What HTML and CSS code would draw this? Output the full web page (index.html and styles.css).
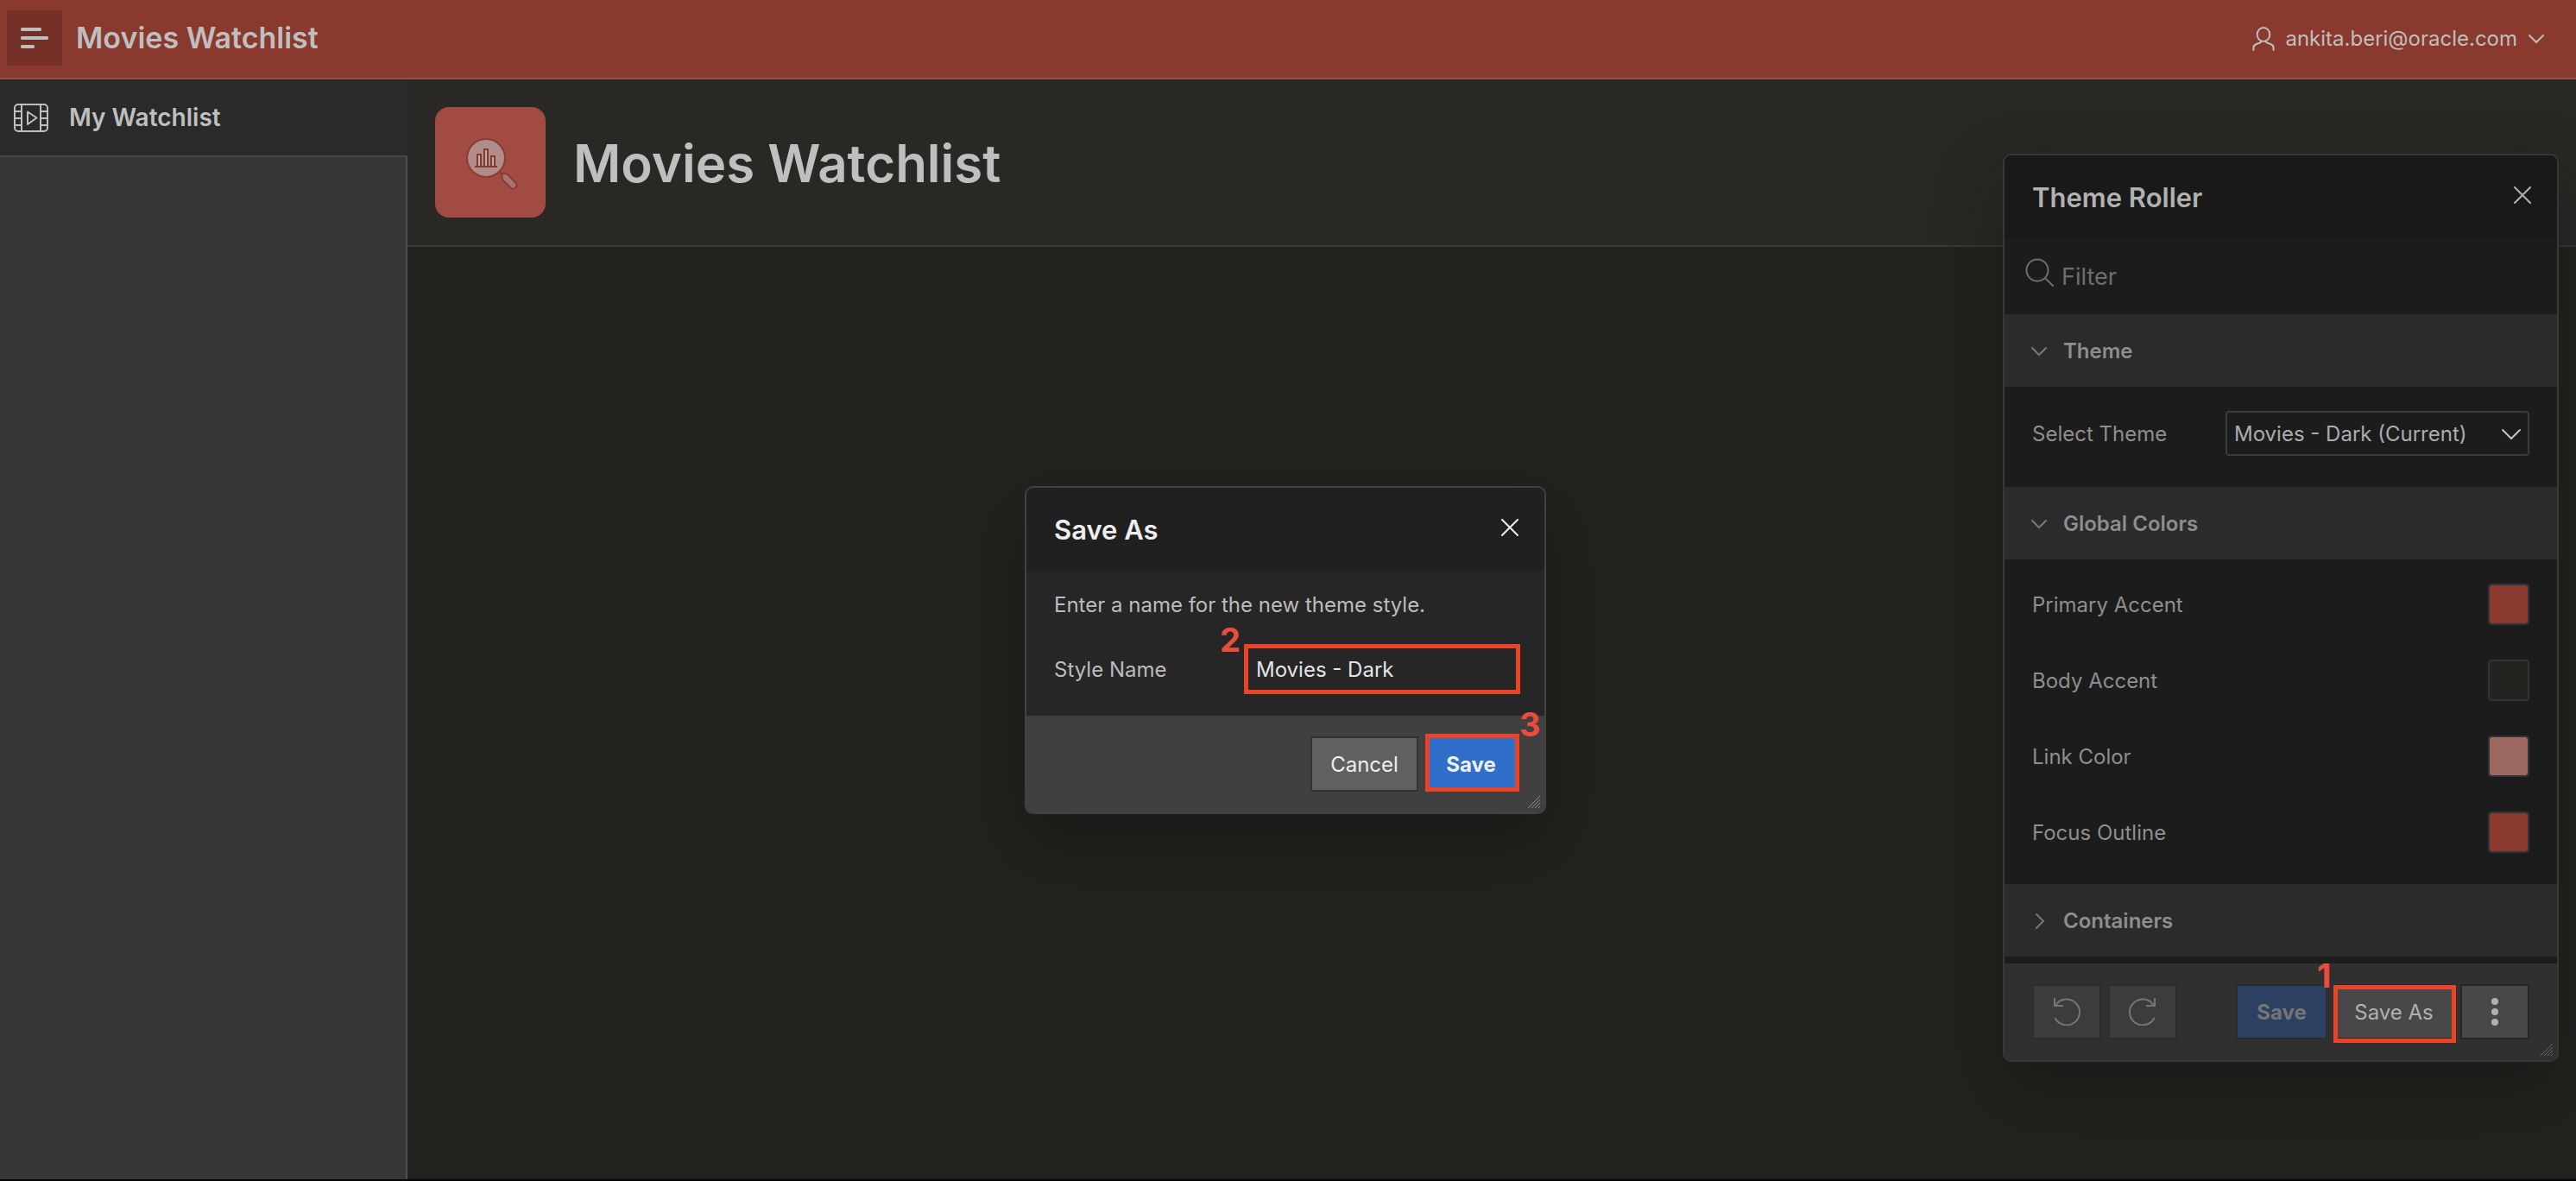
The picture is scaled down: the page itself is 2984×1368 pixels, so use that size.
FILE: index.html
```html
<!DOCTYPE html>
<html lang="en">
<head>
<meta charset="utf-8">
<meta name="viewport" content="width=device-width, initial-scale=1">
<title>Movies Watchlist</title>
<link rel="stylesheet" href="styles.css">
</head>
<body>
<header class="app-header">
  <button class="nav-toggle" type="button" aria-label="Toggle navigation">
    <svg width="32" height="24" viewBox="0 0 32 24" aria-hidden="true"><g fill="currentColor"><rect width="24" height="4" rx="1.5"/><rect y="10" width="32" height="4" rx="1.5"/><rect y="20" width="16" height="4" rx="1.5"/></g></svg>
  </button>
  <a class="app-name" href="#">Movies Watchlist</a>
  <button class="user-menu" type="button">
    <svg width="26" height="28" viewBox="0 0 26 28" aria-hidden="true"><g fill="none" stroke="currentColor" stroke-width="2" stroke-linecap="round"><ellipse cx="13" cy="9" rx="7.3" ry="8"/><path d="M1.4 27v-2.500c0-2.600 1.500-3.800 3.500-4.500l3.500-1.200c1.300-.5 2-1.100 2.300-2.200M24.600 27v-2.500c0-2.600-1.500-3.800-3.500-4.500l-3.500-1.200c-1.300-.5-2-1.100-2.300-2.200"/></g></svg>
    <span>ankita.beri@oracle.com</span>
    <svg width="20" height="12" viewBox="0 0 20 12" aria-hidden="true"><path d="M2 2l8 8 8-8" fill="none" stroke="currentColor" stroke-width="2" stroke-linecap="round"/></svg>
  </button>
</header>

<div class="app-body">
  <nav class="side-nav" aria-label="Main">
    <a class="nav-item" href="#">
      <svg width="40" height="33" viewBox="0 0 40 33" aria-hidden="true"><g fill="none" stroke="currentColor" stroke-width="2"><rect x="1" y="1" width="38" height="31" rx="4"/><path d="M9 1v31M31 1v31M1 9h8M1 17h8M1 25h8M31 9h8M31 17h8M31 25h8M16 9.500v14.500l10.500-7.500z" stroke-linejoin="round"/></g></svg>
      <span>My Watchlist</span>
    </a>
  </nav>
  <main class="content">
    <section class="hero">
      <div class="hero-icon">
        <svg width="64" height="64" viewBox="0 0 64 64" aria-hidden="true">
          <circle cx="27" cy="27" r="22" fill="#b08d89" stroke="#873c34" stroke-width="2"/>
          <path d="M43 43l3 3" stroke="#873c34" stroke-width="2"/>
          <path d="M45.500 47.500q-.5-2.500 2-2.500 3-.5 5 1.500l9 9.500c3 4-2 8.500-6 5.500l-9-9q-1.500-2-1-5z" fill="#a77570" stroke="#873c34" stroke-width="2"/>
          <g fill="#c3aeab" stroke="#843830" stroke-width="2"><path d="M17 37V23h4v14M25 37V17h4v20M33 37V25h4v12"/><path d="M14 37h26"/></g>
        </svg>
      </div>
      <h1>Movies Watchlist</h1>
    </section>
  </main>
</div>

<section class="dialog theme-roller" role="dialog" aria-labelledby="roller-title">
  <header class="dialog-head">
    <h2 id="roller-title">Theme Roller</h2>
    <button class="close" type="button" aria-label="Close"><svg width="20" height="20" viewBox="0 0 20 20" aria-hidden="true"><path d="M1 1l18 18M19 1L1 19" stroke="currentColor" stroke-width="2" stroke-linecap="round"/></svg></button>
  </header>
  <div class="filter">
    <svg width="34" height="34" viewBox="0 0 34 34" aria-hidden="true"><g fill="none" stroke="currentColor" stroke-width="2" stroke-linecap="round"><circle cx="14" cy="14" r="12.500"/><path d="M23 23l9 9"/></g></svg>
    <input type="text" placeholder="Filter" aria-label="Filter">
  </div>
  <button class="group-head" type="button" aria-expanded="true">
    <svg width="20" height="20" viewBox="0 0 20 20" aria-hidden="true"><path d="M2 6l8 8 8-8" fill="none" stroke="currentColor" stroke-width="2" stroke-linecap="round"/></svg>Theme
  </button>
  <div class="group group-select">
    <div class="row">
      <label for="theme">Select Theme</label>
      <div class="select-box">
        <select id="theme"><option>Movies - Dark (Current)</option></select>
        <svg width="24" height="14" viewBox="0 0 24 14" aria-hidden="true"><path d="M2 2l10 10 10-10" fill="none" stroke="currentColor" stroke-width="2" stroke-linecap="round"/></svg>
      </div>
    </div>
  </div>
  <button class="group-head" type="button" aria-expanded="true">
    <svg width="20" height="20" viewBox="0 0 20 20" aria-hidden="true"><path d="M2 6l8 8 8-8" fill="none" stroke="currentColor" stroke-width="2" stroke-linecap="round"/></svg>Global Colors
  </button>
  <div class="group">
    <div class="row"><label for="c1">Primary Accent</label><input id="c1" type="color" value="#89392d"></div>
    <div class="row"><label for="c2">Body Accent</label><input id="c2" type="color" value="#24221e"></div>
    <div class="row"><label for="c3">Link Color</label><input id="c3" type="color" value="#9d6860"></div>
    <div class="row"><label for="c4">Focus Outline</label><input id="c4" type="color" value="#89392d"></div>
  </div>
  <button class="group-head" type="button" aria-expanded="false">
    <svg width="20" height="20" viewBox="0 0 20 20" aria-hidden="true"><path d="M7 2l8 8-8 8" fill="none" stroke="currentColor" stroke-width="2" stroke-linecap="round"/></svg>Containers
  </button>
  <footer class="dialog-foot">
    <button class="btn icon-btn faded" type="button" aria-label="Undo" disabled><svg width="32" height="32" viewBox="0 0 32 32" aria-hidden="true"><path d="M2 0v9h10M3.300 8.500A15 15 0 1 1 2.500 23" fill="none" stroke="currentColor" stroke-width="2"/></svg></button>
    <button class="btn icon-btn faded" type="button" aria-label="Redo" disabled><svg width="32" height="32" viewBox="0 0 32 32" aria-hidden="true"><path d="M30 0v9H20M28.700 8.500A15 15 0 1 0 29.500 23" fill="none" stroke="currentColor" stroke-width="2"/></svg></button>
    <span class="spacer"></span>
    <button class="btn text-btn btn-save faded" type="button" disabled>Save</button>
    <span class="marked marked-one">
      <button class="btn text-btn btn-save-as" type="button">Save As</button>
      <b class="step">1</b>
    </span>
    <button class="btn icon-btn" type="button" aria-label="More"><svg width="8" height="32" viewBox="0 0 8 32" aria-hidden="true"><g fill="currentColor"><circle cx="4" cy="4" r="4"/><circle cx="4" cy="16" r="4"/><circle cx="4" cy="28" r="4"/></g></svg></button>
  </footer>
  <svg class="grip" width="16" height="16" viewBox="0 0 16 16" aria-hidden="true"><g stroke="currentColor"><path d="M1 15L15 1M5 15L15 5M9 15l6-6M13 15l2-2"/></g></svg>
</section>

<section class="dialog save-dialog" role="dialog" aria-labelledby="save-title">
  <header class="dialog-head">
    <h2 id="save-title">Save As</h2>
    <button class="close" type="button" aria-label="Close"><svg width="20" height="20" viewBox="0 0 20 20" aria-hidden="true"><path d="M1 1l18 18M19 1L1 19" stroke="currentColor" stroke-width="2" stroke-linecap="round"/></svg></button>
  </header>
  <div class="save-body">
    <p>Enter a name for the new theme style.</p>
    <div class="field">
      <label for="style-name">Style Name</label>
      <span class="marked marked-two">
        <input id="style-name" type="text" value="Movies - Dark">
        <b class="step">2</b>
      </span>
    </div>
  </div>
  <footer class="dialog-foot">
    <span class="spacer"></span>
    <button class="btn text-btn btn-cancel" type="button">Cancel</button>
    <span class="marked marked-three">
      <button class="btn text-btn btn-save" type="button">Save</button>
      <b class="step">3</b>
    </span>
  </footer>
  <svg class="grip" width="16" height="16" viewBox="0 0 16 16" aria-hidden="true"><g stroke="currentColor"><path d="M1 15L15 1M5 15L15 5M9 15l6-6M13 15l2-2"/></g></svg>
</section>
</body>
</html>
```
FILE: styles.css
```css
* { box-sizing: border-box; }

body {
  margin: 0;
  min-height: 100vh;
  display: flex;
  flex-direction: column;
  position: relative;
  background: #24221e;
  border-bottom: 2px solid #060406;
  color: #bfbfbf;
  font: 24px/32px Inter, "Liberation Sans", sans-serif;
}

h1, h2, p { margin: 0; }
svg { display: block; flex: none; }
a { color: inherit; text-decoration: none; }
button, input, select { font: inherit; color: inherit; margin: 0; }
button { border: 0; padding: 0; background: none; }

.app-header {
  display: flex;
  align-items: center;
  gap: 16px;
  padding: 12px 36px 14px 8px;
  background: #89392d;
  border-bottom: 2px solid #964e43;
}
.nav-toggle {
  display: grid;
  place-items: center;
  width: 64px;
  height: 64px;
  border-radius: 4px;
  background: #742f26;
}
.app-name { font-size: 34px; font-weight: 600; line-height: 40px; }
.user-menu {
  display: flex;
  align-items: center;
  gap: 12px;
  margin-left: auto;
  padding-top: 2px;
}

.app-body { flex: 1; display: flex; }
.side-nav {
  width: 472px;
  background: #373737;
  border-right: 2px solid #4d4d4d;
}
.nav-item {
  display: flex;
  align-items: center;
  gap: 24px;
  height: 90px;
  margin-right: -2px;
  padding-left: 16px;
  background: #2a2a2a;
  border-bottom: 2px solid #464646;
  font-size: 28px;
  font-weight: 600;
}
.content { flex: 1; border-bottom: 2px solid #1a1b1a; }
.hero {
  display: flex;
  align-items: center;
  gap: 32px;
  padding: 32px;
  background: #2a2825;
  border-bottom: 2px solid #3a3836;
}
.hero-icon {
  display: grid;
  place-items: center;
  width: 128px;
  height: 128px;
  border-radius: 16px;
  background: #a14b42;
}
.hero h1 { padding-top: 2px; font-size: 60px; line-height: 72px; font-weight: 600; }

.dialog {
  position: absolute;
  display: flex;
  flex-direction: column;
  border: 2px solid #3a3836;
  border-radius: 10px;
  overflow: hidden;
}
.dialog-head {
  display: flex;
  align-items: center;
  justify-content: space-between;
  height: 96px;
  padding: 0 30px 0 32px;
}
.dialog-head h2 { padding-top: 2px; font-size: 31px; line-height: 40px; font-weight: 600; }
.close { padding-bottom: 4px; }
.dialog-foot {
  display: flex;
  align-items: center;
  gap: 8px;
  padding: 24px 32px;
}
.spacer { flex: 1; }
.grip { position: absolute; right: 4px; bottom: 4px; }

.btn {
  display: flex;
  align-items: center;
  justify-content: center;
  height: 64px;
  border: 2px solid;
  white-space: nowrap;
}
.text-btn { padding-top: 2px; }
.icon-btn { width: 80px; }
.btn-save { width: 106px; font-weight: 700; }
.btn-save-as { width: 138px; }
.btn-cancel { width: 125px; }
label { padding-top: 2px; }

/* Theme Roller */
.theme-roller {
  top: 178px;
  right: 20px;
  width: 644px;
  background: #1c1c1c;
  color: #8e8e8e;
  box-shadow: 0 32px 80px rgba(16, 16, 18, .4);
}
.theme-roller .dialog-head { background: #191919; color: #b1b1b1; }
.filter {
  display: flex;
  align-items: center;
  gap: 8px;
  height: 88px;
  padding: 0 24px;
  color: #6e6e6e;
}
.filter svg { margin-bottom: 8px; }
.filter input {
  flex: 1;
  height: 52px;
  padding: 0;
  border: 0;
  outline: 0;
  background: none;
  font-size: 27px;
}
.filter input::placeholder { color: #6e6e6e; opacity: 1; }
.group-head {
  display: flex;
  align-items: center;
  gap: 18px;
  height: 84px;
  padding: 2px 0 0 30px;
  background: #2b2b2b;
  font-weight: 600;
}
.group-head svg { color: #777; }
.group { padding: 8px 32px 16px; }
.group-select { padding: 10px 32px 18px; }
.row {
  display: flex;
  align-items: center;
  justify-content: space-between;
  height: 88px;
}
.select-box { position: relative; width: 352px; color: #acacac; }
.select-box select {
  display: block;
  appearance: none;
  width: 100%;
  height: 52px;
  padding: 2px 40px 0 8px;
  border: 2px solid #3b3b3b;
  border-radius: 4px;
  background: #1c1c1c;
}
.select-box svg {
  position: absolute;
  top: 20px;
  right: 9px;
  color: #c2c2c2;
  pointer-events: none;
}
.row input[type="color"] {
  width: 48px;
  height: 48px;
  padding: 0;
  border: 2px solid #33333a;
  border-radius: 4px;
  background: none;
}
.row input::-webkit-color-swatch-wrapper { padding: 0; }
.row input::-webkit-color-swatch { border: 0; border-radius: 2px; }
.theme-roller .dialog-foot { margin-top: 8px; background: #303030; }
.theme-roller .btn { background: #484848; border-color: #262626; color: #b1b1b1; }
.theme-roller .btn.faded { background: #3c3c3c; border-color: #2b2b2b; color: #757575; }
.theme-roller .btn-save.faded { background: #2c4061; }
.theme-roller .grip { color: #666; }

/* Save As */
.save-dialog {
  top: 563px;
  left: calc(50% - 305px);
  width: 604px;
  background: #262626;
  border-color: #42423f;
  color: #bcbcbc;
  box-shadow: 0 32px 80px rgba(12, 12, 14, .4);
}
.save-dialog .dialog-head { background: #202020; color: #eee; }
.save-body {
  display: flex;
  flex-direction: column;
  gap: 32px;
  padding: 24px 30px 28px 32px;
}
.field { display: flex; align-items: center; justify-content: space-between; }
.field input {
  display: block;
  width: 316px;
  height: 52px;
  padding: 0 10px;
  border: 2px solid #424242;
  outline: 0;
  background: #262626;
  color: #e4e4e4;
}
.save-dialog .dialog-foot { background: #404040; }
.save-dialog .btn-cancel { background: #606060; border-color: #323232; color: #eee; }
.save-dialog .btn-save { background: #2f6fc9; border-color: #2f6fc9; color: #f0f0f0; }
.save-dialog .grip { color: #8a8a8a; }

/* Numbered step markers laid over the controls */
.marked { position: relative; }
.marked::after {
  content: "";
  position: absolute;
  border: 5px solid #ec4226;
  pointer-events: none;
}
.step {
  position: absolute;
  color: #eb4d3d;
  font-size: 38px;
  line-height: 38px;
  font-weight: 700;
}
.marked-one::after { inset: 1px -3px -4px -1px; }
.marked-two::after { inset: -3px -2px; }
.marked-three::after { inset: -3px -3px 0 0; }
.marked-one .step { left: -20px; top: -29px; }
.marked-two .step { left: -30px; top: -27px; }
.marked-three .step { left: 109px; top: -33px; }
```
